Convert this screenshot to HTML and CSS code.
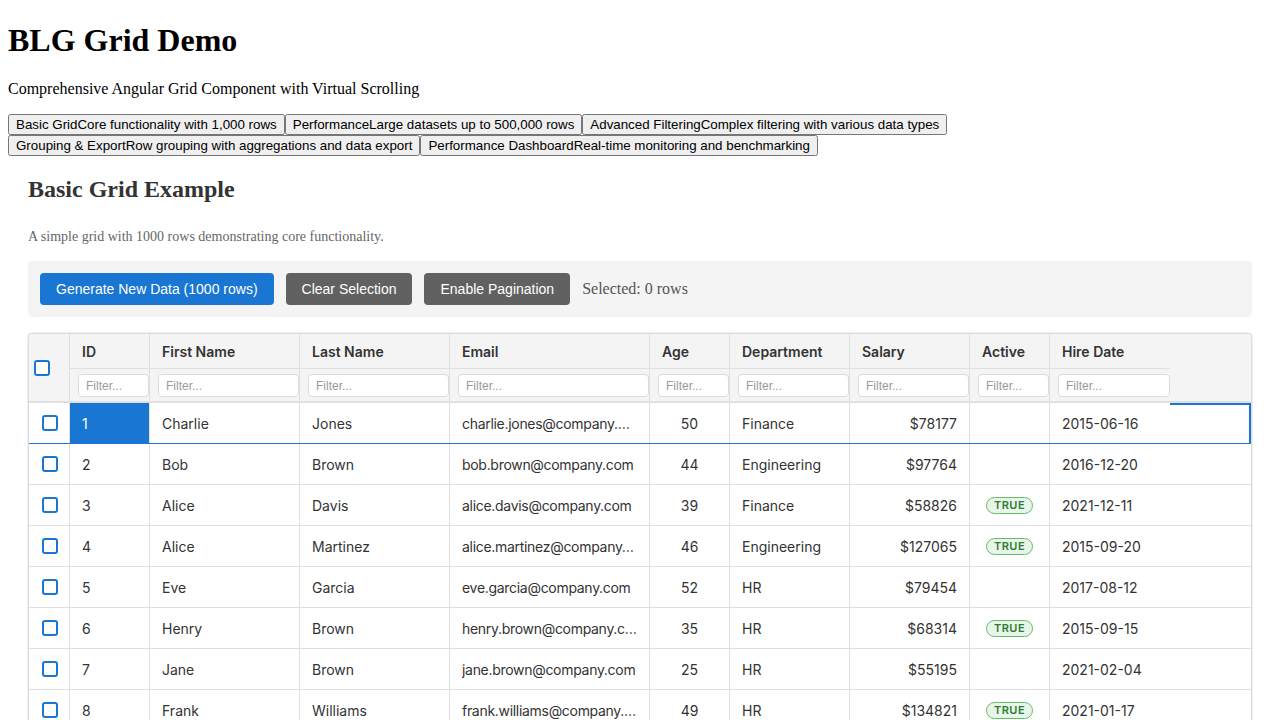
FILE: index.html
```html
<!DOCTYPE html>
<html lang="en">
<head>
<meta charset="utf-8">
<title>BLG Grid Demo</title>
<link rel="stylesheet" href="styles.css">
</head>
<body>
<h1 class="title">BLG Grid Demo</h1>
<p class="subtitle">Comprehensive Angular Grid Component with Virtual Scrolling</p>
<div class="demo-nav"><button class="nav-btn"><span>Basic Grid</span><span>Core functionality with 1,000 rows</span></button><button class="nav-btn"><span>Performance</span><span>Large datasets up to 500,000 rows</span></button><button class="nav-btn"><span>Advanced Filtering</span><span>Complex filtering with various data types</span></button><button class="nav-btn"><span>Grouping &amp; Export</span><span>Row grouping with aggregations and data export</span></button><button class="nav-btn"><span>Performance Dashboard</span><span>Real-time monitoring and benchmarking</span></button></div>

<section class="example">
  <h2>Basic Grid Example</h2>
  <p class="desc">A simple grid with 1000 rows demonstrating core functionality.</p>
  <div class="toolbar">
    <button class="btn btn-primary">Generate New Data (1000 rows)</button>
    <button class="btn btn-secondary">Clear Selection</button>
    <button class="btn btn-secondary">Enable Pagination</button>
    <span class="selected">Selected: 0 rows</span>
  </div>

  <div class="grid">
    <div class="grid-head">
      <div class="head-check"><span class="cb"></span></div>
      <div class="head-cols">
        <div class="head-labels">
          <div class="hc c-id">ID</div>
          <div class="hc c-fn">First Name</div>
          <div class="hc c-ln">Last Name</div>
          <div class="hc c-em">Email</div>
          <div class="hc c-age">Age</div>
          <div class="hc c-dep">Department</div>
          <div class="hc c-sal">Salary</div>
          <div class="hc c-act">Active</div>
          <div class="hc c-hd">Hire Date</div>
        </div>
        <div class="head-filters">
          <div class="fc c-id"><input class="filter" placeholder="Filter..."></div>
          <div class="fc c-fn"><input class="filter" placeholder="Filter..."></div>
          <div class="fc c-ln"><input class="filter" placeholder="Filter..."></div>
          <div class="fc c-em"><input class="filter" placeholder="Filter..."></div>
          <div class="fc c-age"><input class="filter" placeholder="Filter..."></div>
          <div class="fc c-dep"><input class="filter" placeholder="Filter..."></div>
          <div class="fc c-sal"><input class="filter" placeholder="Filter..."></div>
          <div class="fc c-act"><input class="filter" placeholder="Filter..."></div>
          <div class="fc c-hd"><input class="filter" placeholder="Filter..."></div>
        </div>
      </div>
    </div>

    <div class="grid-body">
      <div class="row row-focus">
        <div class="cell chk"><span class="cb"></span></div>
        <div class="cell c-id active-cell">1</div>
        <div class="cell c-fn">Charlie</div>
        <div class="cell c-ln">Jones</div>
        <div class="cell c-em"><span class="trunc">charlie.jones@company.com</span></div>
        <div class="cell c-age">50</div>
        <div class="cell c-dep">Finance</div>
        <div class="cell c-sal">$78177</div>
        <div class="cell c-act"></div>
        <div class="cell c-hd">2015-06-16</div>
        <div class="filler"></div>
      </div>
      <div class="row">
        <div class="cell chk"><span class="cb"></span></div>
        <div class="cell c-id">2</div>
        <div class="cell c-fn">Bob</div>
        <div class="cell c-ln">Brown</div>
        <div class="cell c-em"><span class="trunc">bob.brown@company.com</span></div>
        <div class="cell c-age">44</div>
        <div class="cell c-dep">Engineering</div>
        <div class="cell c-sal">$97764</div>
        <div class="cell c-act"></div>
        <div class="cell c-hd">2016-12-20</div>
        <div class="filler"></div>
      </div>
      <div class="row">
        <div class="cell chk"><span class="cb"></span></div>
        <div class="cell c-id">3</div>
        <div class="cell c-fn">Alice</div>
        <div class="cell c-ln">Davis</div>
        <div class="cell c-em"><span class="trunc">alice.davis@company.com</span></div>
        <div class="cell c-age">39</div>
        <div class="cell c-dep">Finance</div>
        <div class="cell c-sal">$58826</div>
        <div class="cell c-act"><span class="badge">TRUE</span></div>
        <div class="cell c-hd">2021-12-11</div>
        <div class="filler"></div>
      </div>
      <div class="row">
        <div class="cell chk"><span class="cb"></span></div>
        <div class="cell c-id">4</div>
        <div class="cell c-fn">Alice</div>
        <div class="cell c-ln">Martinez</div>
        <div class="cell c-em"><span class="trunc">alice.martinez@company.com</span></div>
        <div class="cell c-age">46</div>
        <div class="cell c-dep">Engineering</div>
        <div class="cell c-sal">$127065</div>
        <div class="cell c-act"><span class="badge">TRUE</span></div>
        <div class="cell c-hd">2015-09-20</div>
        <div class="filler"></div>
      </div>
      <div class="row">
        <div class="cell chk"><span class="cb"></span></div>
        <div class="cell c-id">5</div>
        <div class="cell c-fn">Eve</div>
        <div class="cell c-ln">Garcia</div>
        <div class="cell c-em"><span class="trunc">eve.garcia@company.com</span></div>
        <div class="cell c-age">52</div>
        <div class="cell c-dep">HR</div>
        <div class="cell c-sal">$79454</div>
        <div class="cell c-act"></div>
        <div class="cell c-hd">2017-08-12</div>
        <div class="filler"></div>
      </div>
      <div class="row">
        <div class="cell chk"><span class="cb"></span></div>
        <div class="cell c-id">6</div>
        <div class="cell c-fn">Henry</div>
        <div class="cell c-ln">Brown</div>
        <div class="cell c-em"><span class="trunc">henry.brown@company.com</span></div>
        <div class="cell c-age">35</div>
        <div class="cell c-dep">HR</div>
        <div class="cell c-sal">$68314</div>
        <div class="cell c-act"><span class="badge">TRUE</span></div>
        <div class="cell c-hd">2015-09-15</div>
        <div class="filler"></div>
      </div>
      <div class="row">
        <div class="cell chk"><span class="cb"></span></div>
        <div class="cell c-id">7</div>
        <div class="cell c-fn">Jane</div>
        <div class="cell c-ln">Brown</div>
        <div class="cell c-em"><span class="trunc">jane.brown@company.com</span></div>
        <div class="cell c-age">25</div>
        <div class="cell c-dep">HR</div>
        <div class="cell c-sal">$55195</div>
        <div class="cell c-act"></div>
        <div class="cell c-hd">2021-02-04</div>
        <div class="filler"></div>
      </div>
      <div class="row">
        <div class="cell chk"><span class="cb"></span></div>
        <div class="cell c-id">8</div>
        <div class="cell c-fn">Frank</div>
        <div class="cell c-ln">Williams</div>
        <div class="cell c-em"><span class="trunc">frank.williams@company.com</span></div>
        <div class="cell c-age">49</div>
        <div class="cell c-dep">HR</div>
        <div class="cell c-sal">$134821</div>
        <div class="cell c-act"><span class="badge">TRUE</span></div>
        <div class="cell c-hd">2021-01-17</div>
        <div class="filler"></div>
      </div>
    </div>
  </div>
</section>
</body>
</html>
```

FILE: styles.css
```css
html {
  margin: 0;
  padding: 0;
}

body {
  margin: 0;
  padding: 22px 8px 8px;
  font-family: "Liberation Serif", "Times New Roman", serif;
  color: #000;
  background: #fff;
}

.title {
  margin: 0 0 21.44px;
  font-size: 32px;
}

.subtitle {
  margin: 0 0 16px;
  font-size: 16px;
}

.demo-nav {
  line-height: 1;
}

.nav-btn {
  font-family: "Liberation Sans", Arial, sans-serif;
  font-size: 13.333px;
}

.example {
  padding: 20px;
}

.example h2 {
  margin: 0 0 26px;
  font-size: 24px;
  color: #333;
}

.desc {
  margin: 0 0 16px;
  font-size: 14px;
  color: #666;
}

.toolbar {
  display: flex;
  align-items: center;
  gap: 12px;
  padding: 12px;
  background: #f4f4f4;
  border-radius: 4px;
  margin-bottom: 16px;
}

.btn {
  font-family: "Liberation Sans", Arial, sans-serif;
  font-size: 14px;
  line-height: 16px;
  padding: 8px 16px;
  border: none;
  border-radius: 4px;
  color: #fff;
  cursor: pointer;
}

.btn-primary {
  background: #1976d2;
}

.btn-secondary {
  background: #616161;
}

.selected {
  font-size: 16px;
  color: #555;
}

/* Grid */
.grid {
  border: 1px solid #dcdcdc;
  box-shadow: 0 0 0 1px #efefef;
  border-radius: 4px;
  overflow: hidden;
  font-family: Inter, "Noto Sans", sans-serif;
  font-size: 14px;
  color: #333;
  background: #fff;
}

.grid-head {
  display: flex;
  background: #f4f4f4;
  border-bottom: 2px solid #e0e0e0;
}

.head-check {
  width: 41px;
  flex: none;
  box-sizing: border-box;
  border-right: 1px solid #e0e0e0;
  display: flex;
  align-items: center;
  padding-left: 5px;
}

.head-cols {
  display: flex;
  flex-direction: column;
}

.head-labels,
.head-filters {
  display: flex;
}

.hc {
  box-sizing: border-box;
  height: 35px;
  padding: 0 12px;
  display: flex;
  align-items: center;
  font-weight: 600;
  border-right: 1px solid #e0e0e0;
  border-bottom: 1px solid #e0e0e0;
}

.fc {
  box-sizing: border-box;
  height: 32px;
  padding: 5px 0 4px 8px;
  border-right: 1px solid #e0e0e0;
  overflow: hidden;
}

.hc.c-hd,
.fc.c-hd,
.cell.c-hd {
  border-right: none;
}

.filter {
  box-sizing: border-box;
  width: 100%;
  height: 23px;
  margin: 0;
  padding: 0 7px;
  border: 1px solid #dcdcdc;
  border-radius: 4px;
  background: #fff;
  font-family: "Liberation Sans", Arial, sans-serif;
  font-size: 12px;
  outline: none;
}

.filter::placeholder {
  color: #9a9a9a;
}

.c-id { width: 80px; flex: none; }
.c-fn { width: 150px; flex: none; }
.c-ln { width: 150px; flex: none; }
.c-em { width: 200px; flex: none; }
.c-age { width: 80px; flex: none; }
.c-dep { width: 120px; flex: none; }
.c-sal { width: 120px; flex: none; }
.c-act { width: 80px; flex: none; }
.c-hd { width: 120px; flex: none; }

.row {
  display: flex;
  box-sizing: border-box;
  height: 41px;
  border-bottom: 1px solid #e0e0e0;
}

.cell {
  box-sizing: border-box;
  padding: 0 12px;
  display: flex;
  align-items: center;
  border-right: 1px solid #e0e0e0;
  white-space: nowrap;
  overflow: hidden;
}

.cell.c-em {
  letter-spacing: -0.3px;
}

.cell.chk {
  width: 41px;
  flex: none;
  justify-content: center;
  padding: 0 0 0 1px;
}

.cell.c-age,
.cell.c-act {
  justify-content: center;
}

.cell.c-sal {
  justify-content: flex-end;
}

.trunc {
  display: block;
  overflow: hidden;
  text-overflow: ellipsis;
  white-space: nowrap;
  min-width: 0;
}

.filler {
  flex: 1;
  box-sizing: border-box;
}

.row-focus {
  border-bottom-color: #1976d2;
}

.row-focus .filler {
  border-top: 2px solid #1976d2;
  border-right: 2px solid #1976d2;
}

.active-cell {
  background: #1976d2;
  color: #fff;
}

.cb {
  display: block;
  width: 16px;
  height: 16px;
  box-sizing: border-box;
  border: 2px solid #1976d2;
  border-radius: 3px;
  background: #fff;
}

.badge {
  display: inline-block;
  padding: 1px 7px;
  font-size: 11px;
  font-weight: 600;
  letter-spacing: 0.5px;
  line-height: 13px;
  color: #2e7d32;
  background: #e8f5e9;
  border: 1px solid #66bb6a;
  border-radius: 10px;
}
```
